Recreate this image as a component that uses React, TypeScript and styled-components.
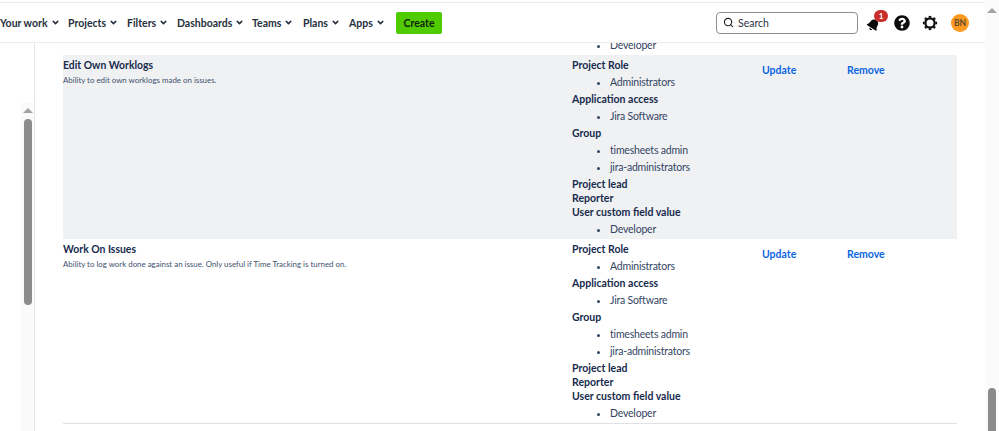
import styled, { createGlobalStyle } from 'styled-components';
import { ChevronDown, Search } from 'lucide-react';
import { FaBell, FaQuestionCircle } from 'react-icons/fa';

const GlobalStyle = createGlobalStyle`
  html, body {
    margin: 0;
    padding: 0;
    background: #fff;
    overflow: hidden;
  }
  body {
    font-family: Lato, "Noto Sans", sans-serif;
    color: #172b4d;
  }
`;

const Shell = styled.div`
  display: flex;
  width: 999px;
  height: 431px;
  overflow: hidden;
`;

const Main = styled.div`
  flex: 1;
  min-width: 0;
  display: flex;
  flex-direction: column;
`;

const TopStrip = styled.div`
  height: 2px;
  border-bottom: 1px solid #ebebeb;
`;

const Header = styled.header`
  height: 39px;
  flex: none;
  display: flex;
  align-items: center;
  border-bottom: 1px solid #ececec;
  background: #fff;
`;

const Nav = styled.nav`
  display: flex;
  align-items: center;
`;

const NavItem = styled.div<{ $width: number }>`
  width: ${(p) => p.$width}px;
  display: flex;
  align-items: center;
  gap: 3px;
  font-size: 10.5px;
  font-weight: 700;
  color: #26303c;
  white-space: nowrap;
`;

const CreateButton = styled.button`
  width: 46px;
  height: 22px;
  padding: 0;
  border: none;
  border-radius: 2px;
  background: #4fcb00;
  color: #10240a;
  font: 700 10.5px Lato, sans-serif;
`;

const SearchBox = styled.div`
  width: 142px;
  height: 22px;
  margin-left: auto;
  box-sizing: border-box;
  display: flex;
  align-items: center;
  gap: 4px;
  padding-left: 6px;
  border: 1px solid #8a8f98;
  border-radius: 4px;
  font-size: 10.5px;
  color: #2c3440;
`;

const IconGroup = styled.div`
  display: flex;
  align-items: center;
  margin-left: 9px;
  margin-right: 16px;
  gap: 12px;
  color: #0b0b0b;
`;

const BellWrap = styled.div`
  position: relative;
  width: 15px;
  height: 22px;
  padding-top: 3px;
  box-sizing: border-box;
  display: flex;
  align-items: center;
  svg {
    transform: rotate(32deg);
  }
`;

const Badge = styled.span`
  position: absolute;
  top: -2px;
  left: 7px;
  width: 14px;
  height: 12px;
  border-radius: 7px;
  background: #c9302c;
  color: #fff;
  font-size: 8px;
  font-weight: 700;
  line-height: 12px;
  text-align: center;
`;

const Avatar = styled.div`
  width: 18px;
  height: 18px;
  margin-left: 1px;
  border-radius: 50%;
  background: #ff991f;
  color: #5c4a32;
  font-size: 8.5px;
  font-weight: 700;
  line-height: 18px;
  text-align: center;
`;

const Body = styled.div`
  flex: 1;
  min-height: 0;
  display: flex;
`;

const Sidebar = styled.aside`
  width: 34px;
  flex: none;
  display: flex;
  justify-content: flex-end;
  border-right: 1px solid #e6e6e6;
`;

const SidebarTrack = styled.div`
  width: 13px;
  height: 100%;
  padding-top: 65px;
  box-sizing: border-box;
  display: flex;
  flex-direction: column;
  align-items: center;
  background: linear-gradient(#fff 60px, #fafafa 60px);
`;

const ArrowUp = styled.div`
  width: 0;
  height: 0;
  border-left: 5px solid transparent;
  border-right: 5px solid transparent;
  border-bottom: 5px solid #a3a3a3;
`;

const Thumb = styled.div<{ $top: number; $height: number }>`
  width: 8px;
  height: ${(p) => p.$height}px;
  margin-top: ${(p) => p.$top}px;
  flex: none;
  border-radius: 4px;
  background: #8b8b8b;
`;

const Content = styled.main`
  flex: 1;
  min-width: 0;
  padding: 0 28px;
`;

const ClippedRow = styled.div`
  height: 12px;
  overflow: hidden;
  display: grid;
  grid-template-columns: 509px 1fr;
  grid-template-rows: 12px;
  align-items: end;
`;

const Row = styled.section<{ $shaded?: boolean; $last?: boolean }>`
  height: ${(p) => (p.$last ? 185 : 184)}px;
  box-sizing: border-box;
  padding-top: 3px;
  display: grid;
  grid-template-columns: 509px 190px 85px 1fr;
  background: ${(p) => (p.$shaded ? '#f0f1f3' : '#fff')};
  border-bottom: ${(p) => (p.$last ? '1px solid #dfe1e4' : 'none')};
`;

const NameCell = styled.div``;

const RowTitle = styled.h3`
  margin: 0;
  font-size: 10.4px;
  line-height: 14px;
  font-weight: 700;
  color: #172b4d;
`;

const RowDescription = styled.p`
  margin: 3px 0 0;
  font-size: 7.9px;
  line-height: 11px;
  color: #42526e;
`;

const Permissions = styled.div`
  display: flex;
  flex-direction: column;
`;

const PermissionLabel = styled.div`
  font-size: 10.5px;
  font-weight: 700;
  line-height: 14px;
  color: #172b4d;
`;

const PermissionList = styled.ul`
  margin: 2px 0 1px;
  padding: 0 0 0 38px;
  list-style: disc;
`;

const PermissionItem = styled.li`
  font-size: 10.5px;
  letter-spacing: -0.2px;
  line-height: 17px;
  color: #344563;
`;

const ActionLink = styled.a`
  padding-top: 5px;
  font-size: 10.5px;
  font-weight: 700;
  line-height: 14px;
  color: #0c66e4;
`;

const RightScrollbar = styled.div`
  width: 14px;
  flex: none;
  padding-top: 8px;
  box-sizing: border-box;
  display: flex;
  flex-direction: column;
  align-items: center;
  background: #fbfbfb;
`;

const navItems = [
  { label: 'Your work', width: 68 },
  { label: 'Projects', width: 59 },
  { label: 'Filters', width: 50 },
  { label: 'Dashboards', width: 75 },
  { label: 'Teams', width: 51 },
  { label: 'Plans', width: 46 },
  { label: 'Apps', width: 47 },
];

const permissions = [
  { label: 'Project Role', items: ['Administrators'] },
  { label: 'Application access', items: ['Jira Software'] },
  { label: 'Group', items: ['timesheets admin', 'jira-administrators'] },
  { label: 'Project lead', items: [] },
  { label: 'Reporter', items: [] },
  { label: 'User custom field value', items: ['Developer'] },
];

const rows = [
  { title: 'Edit Own Worklogs', description: 'Ability to edit own worklogs made on issues.' },
  {
    title: 'Work On Issues',
    description: 'Ability to log work done against an issue. Only useful if Time Tracking is turned on.',
  },
];

const teeth = [0, 45, 90, 135, 180, 225, 270, 315];

const GearIcon = () => (
  <svg width="16" height="16" viewBox="0 0 16 16" fill="none" stroke="currentColor">
    <circle cx="8" cy="8" r="4.6" strokeWidth="2.2" />
    {teeth.map((angle) => (
      <line key={angle} x1="8" y1="2.6" x2="8" y2="0.9" strokeWidth="2.6" transform={`rotate(${angle} 8 8)`} />
    ))}
  </svg>
);

export default function App() {
  return (
    <>
      <GlobalStyle />
      <Shell>
        <Main>
          <TopStrip />
          <Header>
            <Nav>
              {navItems.map((item) => (
                <NavItem key={item.label} $width={item.width}>
                  {item.label}
                  <ChevronDown size={9} strokeWidth={4} />
                </NavItem>
              ))}
              <CreateButton>Create</CreateButton>
            </Nav>
            <SearchBox>
              <Search size={11} strokeWidth={2.4} color="#222" />
              Search
            </SearchBox>
            <IconGroup>
              <BellWrap>
                <FaBell size={13} />
                <Badge>1</Badge>
              </BellWrap>
              <FaQuestionCircle size={16} />
              <GearIcon />
              <Avatar>BN</Avatar>
            </IconGroup>
          </Header>
          <Body>
            <Sidebar>
              <SidebarTrack>
                <ArrowUp />
                <Thumb $top={6} $height={186} />
              </SidebarTrack>
            </Sidebar>
            <Content>
              <ClippedRow>
                <div />
                <PermissionList>
                  <PermissionItem>Developer</PermissionItem>
                </PermissionList>
              </ClippedRow>
              {rows.map((row, index) => (
                <Row key={row.title} $shaded={index === 0} $last={index === rows.length - 1}>
                  <NameCell>
                    <RowTitle>{row.title}</RowTitle>
                    <RowDescription>{row.description}</RowDescription>
                  </NameCell>
                  <Permissions>
                    {permissions.map((permission) => (
                      <div key={permission.label}>
                        <PermissionLabel>{permission.label}</PermissionLabel>
                        {permission.items.length > 0 && (
                          <PermissionList>
                            {permission.items.map((name) => (
                              <PermissionItem key={name}>{name}</PermissionItem>
                            ))}
                          </PermissionList>
                        )}
                      </div>
                    ))}
                  </Permissions>
                  <ActionLink>Update</ActionLink>
                  <ActionLink>Remove</ActionLink>
                </Row>
              ))}
            </Content>
          </Body>
        </Main>
        <RightScrollbar>
          <ArrowUp />
          <Thumb $top={375} $height={60} />
        </RightScrollbar>
      </Shell>
    </>
  );
}
